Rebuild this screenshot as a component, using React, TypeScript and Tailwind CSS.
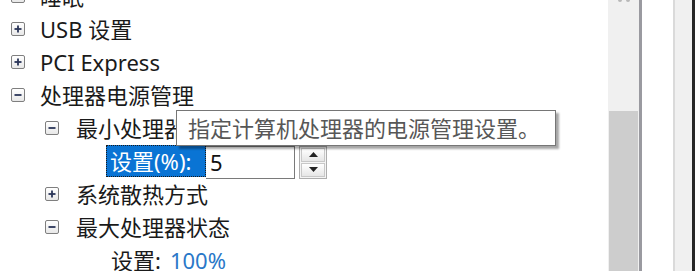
import React from "react";

const font = { fontFamily: '"Noto Sans", "Noto Sans CJK SC", sans-serif' };

const Expander = ({ open }: { open: boolean }) => (
  <span className="w-[14px] h-[14px] border border-[#7f7f7f] rounded-[2px] bg-gradient-to-b from-white to-[#e8e8e8] flex items-center justify-center shrink-0">
    <svg width="8" height="8" viewBox="0 0 8 8">
      <path d="M0.5 4h7" stroke="#2a3558" strokeWidth="1.8" />
      {!open && <path d="M4 0.5v7" stroke="#2a3558" strokeWidth="1.8" />}
    </svg>
  </span>
);

const Row = ({
  indent,
  open,
  children,
}: {
  indent: "l1" | "l2";
  open: boolean;
  children: React.ReactNode;
}) => (
  <div className={`h-[33px] flex items-center ${indent === "l1" ? "pl-[11px]" : "pl-[45px]"}`}>
    <Expander open={open} />
    <span className={`${indent === "l1" ? "ml-[15px]" : "ml-[17px]"} text-[22px] leading-none text-[#1a1a1a] whitespace-nowrap`}>
      {children}
    </span>
  </div>
);

const Spinner = () => (
  <div className="ml-[4px] w-[28px] h-[33px] border border-[#adadad] bg-[#f4f4f4] flex flex-col p-[1px] gap-[1px]">
    <div className="flex-1 border border-[#c8c8c8] bg-gradient-to-b from-white to-[#e6e6e6] flex items-center justify-center">
      <svg width="9" height="5" viewBox="0 0 9 5">
        <path d="M0 5L4.5 0L9 5Z" fill="#222" />
      </svg>
    </div>
    <div className="flex-1 border border-[#c8c8c8] bg-gradient-to-b from-white to-[#e6e6e6] flex items-center justify-center">
      <svg width="9" height="5" viewBox="0 0 9 5">
        <path d="M0 0L4.5 5L9 0Z" fill="#222" />
      </svg>
    </div>
  </div>
);

export default function App() {
  return (
    <div className="w-[695px] h-[271px] overflow-hidden bg-white flex" style={font}>
      <div className="relative w-[608px] h-full">
        <div className="-mt-[21px] flex flex-col">
          <Row indent="l1" open={false}>睡眠</Row>
          <Row indent="l1" open={false}>USB 设置</Row>
          <Row indent="l1" open={false}>PCI Express</Row>
          <Row indent="l1" open={true}>处理器电源管理</Row>
          <Row indent="l2" open={true}>最小处理器状态</Row>
          <div className="h-[33px] flex items-center pl-[106px]">
            <div className="h-[32px] w-[100px] bg-[#0a74d4] border border-dotted border-[#1a1a1a] flex items-center pl-[3px] text-[22px] leading-none text-white whitespace-nowrap">
              设置(%):
            </div>
            <div className="h-[33px] w-[89px] mt-[3px] border border-[#7a7a7a] border-l-0 bg-white flex items-center pl-[4px] text-[22px] leading-none text-[#111]">
              5
            </div>
            <div className="mt-[3px]">
              <Spinner />
            </div>
          </div>
          <Row indent="l2" open={false}>系统散热方式</Row>
          <Row indent="l2" open={true}>最大处理器状态</Row>
          <div className="h-[33px] flex items-center pl-[111px] text-[22px] leading-none whitespace-nowrap">
            <span className="text-[#1a1a1a]">设置:</span>
            <span className="ml-[9px] text-[#2a78c8]">100%</span>
          </div>
        </div>

        <div className="absolute left-[176px] top-[110px] w-[380px] h-[36px] bg-white border border-[#767676] shadow-[3px_3px_2px_rgba(0,0,0,0.35)] flex items-center pl-[11px] text-[22px] leading-none text-[#575757] whitespace-nowrap">
          指定计算机处理器的电源管理设置。
        </div>
      </div>

      <div className="w-[31px] h-full bg-[#f0f0f0] flex flex-col">
        <div className="h-[113px] flex justify-center gap-[4px] -mt-[2px]">
          <span className="w-[4px] h-[4px] rounded-full bg-[#b8b8b8]" />
          <span className="w-[4px] h-[4px] rounded-full bg-[#b8b8b8]" />
        </div>
        <div className="flex-1 mx-[1px] bg-[#cdcdcd]" />
      </div>
      <div className="w-[3px] h-full bg-[#9a9aa0]" />
      <div className="w-[31px] h-full bg-white" />
      <div className="w-[2px] h-full bg-[#dadada]" />
      <div className="w-[17px] h-full bg-[#f0f0f0]" />
      <div className="w-[3px] h-full bg-[#262626]" />
    </div>
  );
}
